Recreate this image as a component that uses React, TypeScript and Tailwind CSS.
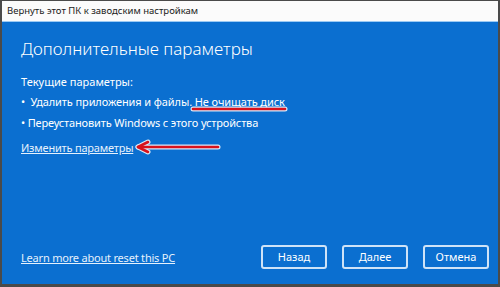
import React from 'react';

function Underline() {
  return (
    <svg className="absolute left-[188px] top-[82px]" width="98" height="10" viewBox="0 0 98 10">
      <line x1="3" y1="5" x2="95" y2="5" stroke="#ffffff" strokeWidth="5" strokeLinecap="round" opacity="0.85" />
      <line x1="3" y1="5" x2="95" y2="5" stroke="#d8121c" strokeWidth="2.6" strokeLinecap="round" />
    </svg>
  );
}

function Arrow() {
  return (
    <svg className="absolute left-[132px] top-[117px]" width="88" height="16" viewBox="0 0 88 16">
      <g stroke="#ffffff" strokeWidth="5" strokeLinecap="round" strokeLinejoin="round" fill="none" opacity="0.85">
        <line x1="4" y1="8" x2="84" y2="8" />
        <polyline points="14,3 4,8 14,13" />
      </g>
      <g stroke="#d8121c" strokeWidth="2.6" strokeLinecap="round" strokeLinejoin="round" fill="none">
        <line x1="4" y1="8" x2="84" y2="8" />
        <polyline points="14,3 4,8 14,13" />
      </g>
    </svg>
  );
}

export default function App() {
  return (
    <div
      className="w-[500px] h-[287px] bg-[#4a4a4a] pt-px pl-[2px] pr-[2px] pb-[3px] flex flex-col"
      style={{ fontFamily: '"Noto Sans", "Open Sans", sans-serif' }}
    >
      {/* Title bar */}
      <div className="h-[21px] bg-[#fbfbfb] flex items-center pl-[5px] text-[9.5px] text-[#1a1a1a] border-b border-[#9ccaf3]">
        Вернуть этот ПК к заводским настройкам
      </div>

      {/* Body */}
      <div className="relative flex-1 bg-[#0b6fd0] text-white flex flex-col px-[19px]">
        <h1 className="mt-[16px] text-[17px] font-light leading-[22px]">Дополнительные параметры</h1>

        <div className="mt-[15px] text-[11px] leading-[14px]">Текущие параметры:</div>
        <div className="mt-[6px] text-[11px] leading-[14px] tracking-[-0.1px]">
          •&nbsp;&nbsp;Удалить приложения и файлы. Не очищать диск
        </div>
        <div className="mt-[7px] text-[11px] leading-[14px] tracking-[-0.15px]">
          • Переустановить Windows с этого устройства
        </div>
        <a className="mt-[11px] text-[11px] leading-[14px] underline text-[#e6f1fc] w-fit tracking-[-0.2px]">
          Изменить параметры
        </a>

        <div className="mt-auto mb-[15px] flex items-center justify-between">
          <a className="text-[11px] underline text-[#e6f1fc] mt-[2px] tracking-[-0.2px]">Learn more about reset this PC</a>
          <div className="flex gap-[15px] mr-[-10px]">
            {['Назад', 'Далее', 'Отмена'].map((b) => (
              <button
                key={b}
                className="w-[66px] h-[24px] rounded-[3px] border-2 border-[#cfe3f7] text-[11px] text-white flex items-center justify-center"
              >
                {b}
              </button>
            ))}
          </div>
        </div>

        <Underline />
        <Arrow />
      </div>
    </div>
  );
}
